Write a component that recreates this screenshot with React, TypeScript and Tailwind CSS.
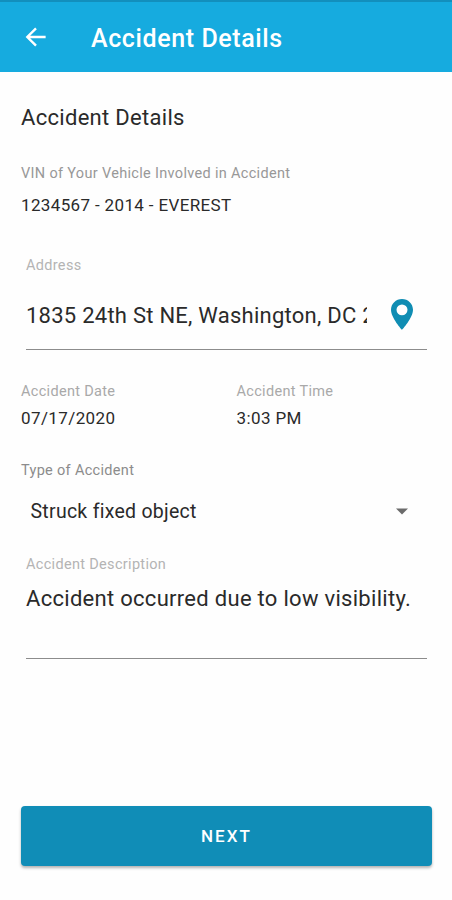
import React from 'react';

function Label({ children, className = '' }: { children: React.ReactNode; className?: string }) {
  return (
    <div className={`h-5 text-[14.5px] leading-5 tracking-[0.32px] whitespace-nowrap ${className}`}>{children}</div>
  );
}

function Header() {
  return (
    <header className="flex h-[71.5px] items-center border-t-2 border-[#128fbd] bg-[#16abdf] pt-1 pl-6 text-white">
      <svg viewBox="0 0 24 24" className="mr-px mb-[3px] ml-px h-[22px] w-[22px]" fill="none" stroke="currentColor" strokeWidth="2.600">
        <path d="M22.500 12H2.500M12 2.500 2.500 12l9.500 9.500" />
      </svg>
      <h1 className="ml-[43px] text-[25px] leading-8 font-medium tracking-[0.6px] whitespace-nowrap">
        Accident Details
      </h1>
    </header>
  );
}

export default function App() {
  return (
    <div className="h-[900px] w-[452px] overflow-hidden bg-[#fefefe] font-['Roboto',sans-serif] text-[#2a2a2a]">
      <Header />
      <main className="px-[21px] pt-[31.5px]">
        <h2 className="h-[30px] text-[22px] leading-[30px] tracking-[0.3px] whitespace-nowrap">Accident Details</h2>
        <Label className="mt-[31px] text-[#989898]">VIN of Your Vehicle Involved in Accident</Label>
        <div className="mt-[11px] h-5 text-[17px] leading-5 tracking-[0.36px] whitespace-nowrap">
          1234567 - 2014 - EVEREST
        </div>

        <section className="mr-1 ml-[5px] mt-[41px] border-b border-[#8c8c8c]">
          <Label className="text-[#b4b4b4]">Address</Label>
          <div className="mt-5 flex h-[53px] items-start justify-between">
            <div className="h-10 w-[341px] overflow-hidden text-[22px] leading-10 tracking-[0.25px] whitespace-nowrap">
              1835 24th St NE, Washington, DC 2
            </div>
            <svg viewBox="5 2 14 20" className="mt-[3px] mr-[14px] h-[31px] w-[22px]" preserveAspectRatio="none">
              <path
                fill="#108db3"
                fillRule="evenodd"
                d="M12 2C8.130 2 5 5.130 5 9c0 5.250 7 13 7 13s7-7.750 7-13c0-3.870-3.130-7-7-7zm0 3.500a3.500 3.500 0 1 1 0 7 3.500 3.500 0 0 1 0-7z"
              />
            </svg>
          </div>
        </section>

        <section className="mt-8 grid grid-cols-[215.5px_1fr]">
          <div>
            <Label className="text-[#a9a9a9]">Accident Date</Label>
            <div className="mt-1.5 h-5 text-[17px] leading-5 tracking-[0.4px]">07/17/2020</div>
          </div>
          <div>
            <Label className="text-[#a9a9a9]">Accident Time</Label>
            <div className="mt-1.5 h-5 text-[17px] leading-5 tracking-[0.4px]">3:03 PM</div>
          </div>
        </section>

        <Label className="mt-[33px] text-[#8c8c8c]">Type of Accident</Label>
        <div className="mt-[18px] flex h-6 items-center justify-between pr-[23px] pl-[9.5px]">
          <span className="pt-0.5 text-[19.5px] leading-6 tracking-[0.27px]">Struck fixed object</span>
          <svg viewBox="0 0 12 7" className="h-[7px] w-3">
            <path d="M0 0.500h12l-6 6z" fill="#6b6b6b" />
          </svg>
        </div>

        <section className="mr-1 ml-[5px] mt-8 h-[104px] border-b border-[#8c8c8c]">
          <Label className="text-[#b4b4b4]">Accident Description</Label>
          <div className="mt-[9px] text-[22px] leading-[30px] tracking-[0.29px] whitespace-nowrap">
            Accident occurred due to low visibility.
          </div>
        </section>

        <button className="mt-[147px] -mr-px block h-[60px] w-[411px] rounded-[4px] bg-[#108db7] pt-px text-[17px] leading-[59px] font-medium tracking-[2.1px] text-white shadow-[0_2px_3px_rgba(0,0,0,0.3)]">
          NEXT
        </button>
      </main>
    </div>
  );
}
